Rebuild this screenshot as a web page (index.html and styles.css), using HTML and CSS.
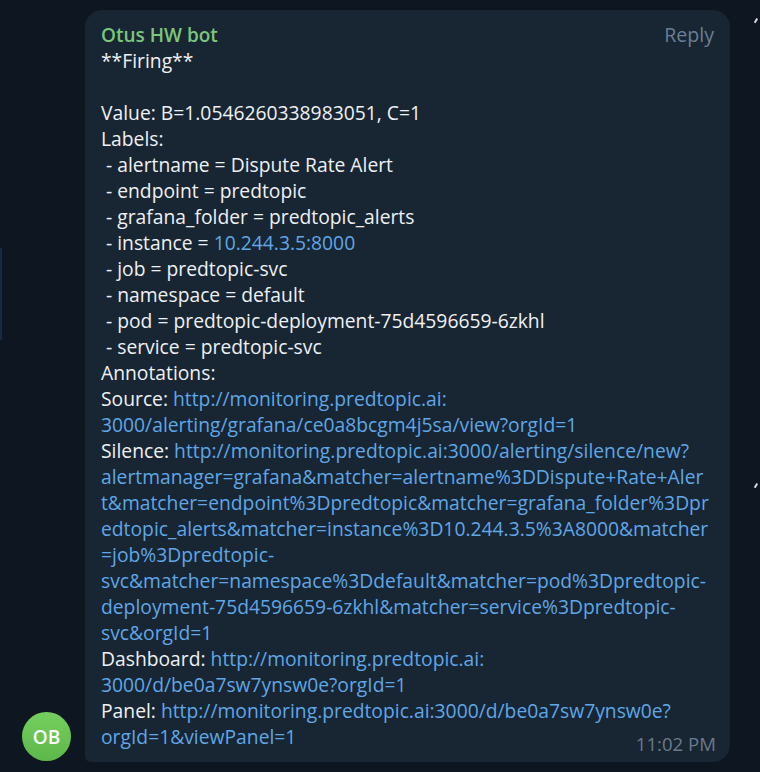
FILE: index.html
```html
<!DOCTYPE html>
<html>
<head>
<meta charset="utf-8">
<link rel="stylesheet" href="styles.css">
</head>
<body>
<div class="chat">
  <div class="edge-left"></div>
  <div class="msg-row">
    <div class="avatar-col">
      <div class="avatar">OB</div>
    </div>
    <div class="bubble">
      <div class="head">
        <span class="name">Otus HW bot</span>
        <span class="reply">Reply</span>
      </div>
      <div class="line">**Firing**</div>
      <div class="line">&nbsp;</div>
      <div class="line">Value: B=1.0546260338983051, C=1</div>
      <div class="line">Labels:</div>
      <div class="line">&nbsp;- alertname = Dispute Rate Alert</div>
      <div class="line">&nbsp;- endpoint = predtopic</div>
      <div class="line">&nbsp;- grafana_folder = predtopic_alerts</div>
      <div class="line">&nbsp;- instance = <span class="link">10.244.3.5:8000</span></div>
      <div class="line">&nbsp;- job = predtopic-svc</div>
      <div class="line">&nbsp;- namespace = default</div>
      <div class="line">&nbsp;- pod = predtopic-deployment-75d4596659-6zkhl</div>
      <div class="line">&nbsp;- service = predtopic-svc</div>
      <div class="line">Annotations:</div>
      <div class="line">Source: <span class="link">http://monitoring.predtopic.ai:</span></div>
      <div class="line link">3000/alerting/grafana/ce0a8bcgm4j5sa/view?orgId=1</div>
      <div class="line">Silence: <span class="link">http://monitoring.predtopic.ai:3000/alerting/silence/new?</span></div>
      <div class="line link">alertmanager=grafana&amp;matcher=alertname%3DDispute+Rate+Aler</div>
      <div class="line link">t&amp;matcher=endpoint%3Dpredtopic&amp;matcher=grafana_folder%3Dpr</div>
      <div class="line link">edtopic_alerts&amp;matcher=instance%3D10.244.3.5%3A8000&amp;matcher</div>
      <div class="line link">=job%3Dpredtopic-</div>
      <div class="line link">svc&amp;matcher=namespace%3Ddefault&amp;matcher=pod%3Dpredtopic-</div>
      <div class="line link">deployment-75d4596659-6zkhl&amp;matcher=service%3Dpredtopic-</div>
      <div class="line link">svc&amp;orgId=1</div>
      <div class="line">Dashboard: <span class="link">http://monitoring.predtopic.ai:</span></div>
      <div class="line link">3000/d/be0a7sw7ynsw0e?orgId=1</div>
      <div class="line">Panel: <span class="link">http://monitoring.predtopic.ai:3000/d/be0a7sw7ynsw0e?</span></div>
      <div class="line last">
        <span class="link">orgId=1&amp;viewPanel=1</span>
        <span class="time">11:02 PM</span>
      </div>
    </div>
    <div class="side-right">
      <span class="tick"></span>
      <span class="tick"></span>
    </div>
  </div>
</div>
</body>
</html>
```
FILE: styles.css
```css
html, body {
  margin: 0;
  padding: 0;
  background: #0e1621;
}
body {
  width: 760px;
  height: 772px;
  overflow: hidden;
  font-family: "Open Sans", "Liberation Sans", sans-serif;
  color: #eef1f4;
}
.chat {
  display: flex;
  height: 772px;
}
.edge-left {
  width: 2px;
  margin-top: 248px;
  height: 92px;
  background: #162a42;
}
.msg-row {
  flex: 1;
  display: flex;
  padding-top: 10px;
  height: 752px;
}
.avatar-col {
  width: 83px;
  display: flex;
  align-items: flex-end;
  padding-left: 20px;
  box-sizing: border-box;
}
.avatar {
  width: 49px;
  height: 49px;
  border-radius: 50%;
  background: linear-gradient(180deg, #74cf5f 0%, #5cb849 100%);
  color: #ffffff;
  font-weight: 600;
  font-size: 19px;
  display: flex;
  align-items: center;
  justify-content: center;
  margin-bottom: 1px;
}
.bubble {
  width: 645px;
  box-sizing: border-box;
  background: #182533;
  border-radius: 17px 17px 17px 6px;
  padding: 12px 14px 12px 16px;
  font-size: 19.3px;
  line-height: 26px;
}
.head {
  display: flex;
  justify-content: space-between;
  height: 26px;
}
.name {
  color: #7ac77b;
  font-weight: 600;
  font-size: 19px;
}
.reply {
  color: #6a7f92;
  font-size: 19.6px;
  padding-right: 2px;
}
.line {
  white-space: nowrap;
  height: 26px;
}
.link {
  color: #5fa7e6;
}
.last {
  display: flex;
  justify-content: space-between;
  align-items: flex-end;
}
.time {
  color: #6a7b8b;
  font-size: 18.6px;
  line-height: 18px;
  margin-bottom: -3px;
}
.side-right {
  flex: 1;
  display: flex;
  flex-direction: column;
  align-items: flex-end;
  padding-right: 4px;
  gap: 460px;
  padding-top: 8px;
  margin-left: 22px;
}
.tick {
  width: 1.5px;
  height: 5px;
  background: #d5dbe1;
  transform: rotate(30deg);
}
```
